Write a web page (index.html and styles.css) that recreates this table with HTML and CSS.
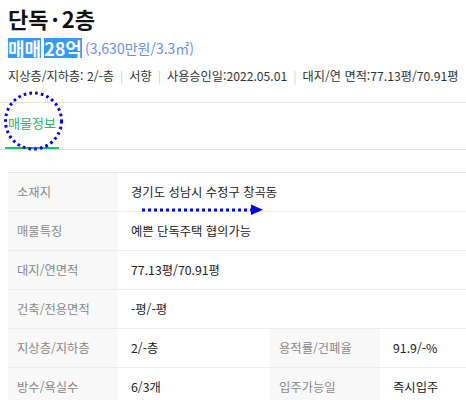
FILE: index.html
```html
<!DOCTYPE html>
<html lang="ko">
<head>
<meta charset="utf-8">
<link rel="stylesheet" href="styles.css">
</head>
<body>
<div class="page">
  <div class="head">
    <h1 class="title">단독<span class="dot">·</span>2층</h1>
    <div class="price"><span class="sel">매매</span><span class="sel">28억</span><span class="unit">(3,630만원/3.3㎡)</span></div>
    <div class="meta">지상층/지하층: 2/-층<span class="sep">|</span>서향<span class="sep">|</span>사용승인일:2022.05.01<span class="sep">|</span>대지/연 면적:77.13평/70.91평</div>
  </div>
  <div class="tabs"><span class="tab active">매물정보</span></div>
  <div class="info">
    <div class="row">
      <div class="lbl">소재지</div><div class="val wide">경기도 성남시 수정구 창곡동</div>
    </div>
    <div class="row">
      <div class="lbl">매물특징</div><div class="val wide">예쁜 단독주택 협의가능</div>
    </div>
    <div class="row">
      <div class="lbl">대지/연면적</div><div class="val wide">77.13평/70.91평</div>
    </div>
    <div class="row">
      <div class="lbl">건축/전용면적</div><div class="val wide">-평/-평</div>
    </div>
    <div class="row">
      <div class="lbl">지상층/지하층</div><div class="val">2/-층</div>
      <div class="lbl">용적률/건폐율</div><div class="val">91.9/-%</div>
    </div>
    <div class="row">
      <div class="lbl">방수/욕실수</div><div class="val">6/3개</div>
      <div class="lbl">입주가능일</div><div class="val">즉시입주</div>
    </div>
  </div>
  <svg class="annot" width="466" height="400" viewBox="0 0 466 400">
    <circle cx="33.5" cy="121" r="28" fill="none" stroke="#0000ff" stroke-width="3" stroke-dasharray="2.6 3.2"/>
    <line x1="142" y1="210" x2="251" y2="210" stroke="#0000ff" stroke-width="3" stroke-dasharray="3 3"/>
    <polygon points="251,204.5 263,209.8 251,215" fill="#0000ff"/>
  </svg>
</div>
</body>
</html>
```
FILE: styles.css
```css
* { box-sizing: border-box; }
html, body { margin: 0; padding: 0; background: #fff; }
body {
  font-family: "Noto Sans CJK KR", "Noto Sans", sans-serif;
  color: #222;
  width: 466px;
  height: 400px;
  overflow: hidden;
}
.page { position: relative; width: 466px; height: 400px; }
.head {
  padding: 4px 0 0 8px;
  height: 103px;
  border-bottom: 1px solid #e2e2e2;
}
.title {
  margin: 0;
  font-size: 22px;
  line-height: 28px;
  font-weight: 700;
  color: #111;
}
.dot { margin: 0 3px; }
.price {
  margin-top: 6px;
  display: flex;
  align-items: center;
  height: 20px;
}
.sel {
  background: #3399ff;
  color: #fff;
  font-size: 18px;
  font-weight: 700;
  line-height: 20px;
  height: 20px;
  margin-right: 3px;
}
.unit {
  font-size: 14px;
  color: #6a8ff2;
  line-height: 20px;
}
.meta {
  margin-top: 9px;
  font-size: 12.2px;
  line-height: 18px;
  color: #333;
  white-space: nowrap;
}
.sep {
  color: #cfcfcf;
  margin: 0 6px;
}
.tabs {
  height: 47px;
  border-bottom: 1px solid #e2e2e2;
  padding-left: 5px;
  display: flex;
}
.tab {
  padding: 10px 3px 14px;
  font-size: 13px;
  line-height: 20px;
}
.tab.active {
  color: #1fb85a;
  border-bottom: 2px solid #10c85a;
}
.info {
  margin: 22px 0 0 8px;
  border-top: 1px solid #e6e6e6;
}
.row {
  display: grid;
  grid-template-columns: 110px 152px 110px 1fr;
  height: 39px;
  border-bottom: 1px solid #ececec;
  font-size: 12.3px;
}
.lbl {
  background: #f8f8f8;
  color: #888;
  padding-left: 9px;
  display: flex;
  align-items: center;
}
.val {
  color: #222;
  padding-left: 13px;
  display: flex;
  align-items: center;
}
.val.wide { grid-column: 2 / 5; }
.annot {
  position: absolute;
  left: 0;
  top: 0;
  pointer-events: none;
}
```
